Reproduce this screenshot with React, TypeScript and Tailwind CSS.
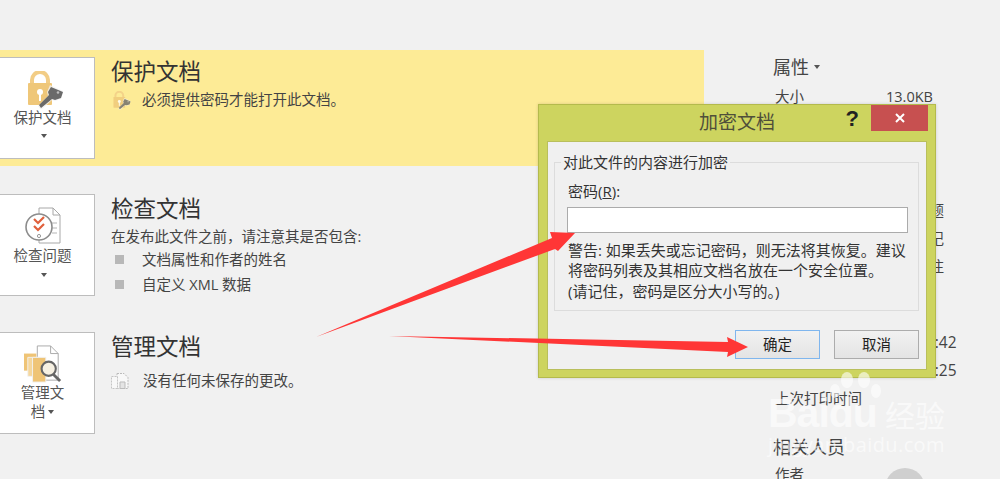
import React from "react";

function LockKeyIcon({ className }: { className: string }) {
  return (
    <svg viewBox="0 0 37 38" className={className}>
      <path d="M5 14V9a8 8 0 0 1 16 0v5" fill="none" stroke="#f2cd86" strokeWidth="4" />
      <path d="M2 12h22a1 1 0 0 1 1 1v20a1 1 0 0 1-1 1H2a1 1 0 0 1-1-1V13a1 1 0 0 1 1-1z" fill="#efc779" />
      <circle cx="13" cy="21" r="3" fill="#fff" />
      <rect x="12" y="22" width="2" height="8" fill="#fff" />
      <path d="M23 14l13 6-2 8-6 2-3-1-11 10-3-4 10-10-1-4z" fill="#f1f1f1" fillOpacity="0.8" />
      <path d="M24 16l12 5-2 6-6 2-3-1-11 9-2-3 10-10-1-3z" fill="#6a6a6a" />
      <circle cx="31" cy="21.5" r="1.3" fill="#bdbdbd" />
    </svg>
  );
}

function InspectIcon({ className }: { className: string }) {
  return (
    <svg viewBox="0 0 36 38" className={className}>
      <path d="M14 1h14l7 7v28H14z" fill="#fff" stroke="#a8a8a8" />
      <path d="M28 1v7h7" fill="none" stroke="#a8a8a8" />
      <path d="M27 16h5M27 21h5M27 26h5" stroke="#b5b5b5" />
      <circle cx="14" cy="20" r="13" fill="#fff" stroke="#8c8c8c" strokeWidth="1.6" />
      <path d="M9 12l4 4 6-6M9 19l4 4 6-6" fill="none" stroke="#e0603c" strokeWidth="2.2" />
      <circle cx="14" cy="29" r="1.6" fill="none" stroke="#999" />
    </svg>
  );
}

function ManageIcon({ className }: { className: string }) {
  return (
    <svg viewBox="0 0 40 40" className={className}>
      <path d="M14 1h14l8 8v28H14z" fill="#fff" stroke="#a8a8a8" />
      <path d="M28 1v8h8" fill="none" stroke="#a8a8a8" />
      <path d="M0 9h13v18H0z" fill="#efc476" />
      <path d="M4 13h13v20H4z" fill="#f5d79d" stroke="#f1f1f1" />
      <path d="M9 13h14v26H9z" fill="#efc476" stroke="#f1f1f1" />
      <circle cx="26" cy="25" r="7.5" fill="#f6f0e2" stroke="#666" strokeWidth="2.2" />
      <path d="M31 31l7 7" stroke="#666" strokeWidth="3" />
    </svg>
  );
}

function SmallDocsIcon() {
  return (
    <svg viewBox="0 0 18 16" className="w-[18px] h-[16px] shrink-0">
      <path d="M6 .5h7l4 4v11H6z" fill="#f8f8f8" stroke="#bbb" strokeDasharray="2 1" />
      <path d="M.5 3.5h6v12h-6z" fill="#f8f8f8" stroke="#c4c4c4" strokeDasharray="2 1" />
      <path d="M9 9h5v6.5H9z" fill="#e4e4e4" stroke="#bbb" />
    </svg>
  );
}

function Caret({ className = "" }: { className?: string }) {
  return (
    <span
      className={`inline-block w-0 h-0 border-x-[3.5px] border-x-transparent border-t-[4px] border-t-[#555] ${className}`}
    />
  );
}

function ActionButton({
  icon,
  children,
}: {
  icon: React.ReactNode;
  children: React.ReactNode;
}) {
  return (
    <button className="-ml-[10px] w-[105px] h-[102px] shrink-0 bg-white border border-[#bdbdbd] flex flex-col items-center text-[14.5px] leading-[19px] text-[#555]">
      {icon}
      {children}
    </button>
  );
}

function Row({ label, value }: { label: string; value?: React.ReactNode }) {
  return (
    <div className="flex h-[28px] items-center pl-[2px] text-[14.5px] text-[#444]">
      <span className="w-[111px] shrink-0">{label}</span>
      <span className="whitespace-nowrap">{value}</span>
    </div>
  );
}

function Heading({ children }: { children: React.ReactNode }) {
  return (
    <div className="h-[28px] flex items-center gap-[5px] text-[18px] text-[#444]">
      {children}
    </div>
  );
}

function DialogButton({
  primary,
  children,
}: {
  primary?: boolean;
  children: React.ReactNode;
}) {
  return (
    <button
      className={`w-[85px] h-[29px] bg-gradient-to-b from-[#f1f1f1] to-[#e4e4e4] text-[14.5px] text-[#222] border ${
        primary ? "border-[#7fb6ee]" : "border-[#acacac]"
      }`}
    >
      {children}
    </button>
  );
}

export default function App() {
  return (
    <div
      lang="zh-CN"
      className="relative flex h-[479px] w-full overflow-hidden bg-[#f1f1f1] text-[#444] [font-family:'Open_Sans','Noto_Sans_CJK_SC',sans-serif]"
    >
      {/* Info page */}
      <div className="w-[704px] shrink-0 pt-[50px]">
        <section className="h-[116px] bg-[#fdeb96] py-[7px] flex gap-[17px]">
          <ActionButton icon={<LockKeyIcon className="w-[37px] h-[38px] mt-[13px] ml-[6px] shrink-0" />}>
            <span className="-mt-[1px]">保护文档</span>
            <Caret className="mt-[7px] ml-[3px]" />
          </ActionButton>
          <div className="-ml-[1px]">
            <h2 className="text-[22.5px] leading-[30px] text-[#333]">保护文档</h2>
            <div className="flex items-center mt-[3px] text-[14.5px] leading-[20px]">
              <LockKeyIcon className="w-[18px] h-[19px] ml-[2px] mr-[11px] shrink-0 opacity-80" />
              必须提供密码才能打开此文档。
            </div>
          </div>
        </section>

        <section className="mt-[28px] h-[102px] flex gap-[17px]">
          <ActionButton icon={<InspectIcon className="w-[36px] h-[38px] mt-[12px] mb-[2px] shrink-0" />}>
            <span className="-mt-[1px]">检查问题</span>
            <Caret className="mt-[8px] ml-[3px]" />
          </ActionButton>
          <div className="-ml-[1px]">
            <h2 className="text-[22.5px] leading-[30px] text-[#333]">检查文档</h2>
            <p className="mt-[3px] text-[14.5px] leading-[20px]">在发布此文件之前，请注意其是否包含:</p>
            <ul className="text-[14.5px] leading-[25px]">
              <li className="flex items-center">
                <span className="w-[9px] h-[9px] bg-[#b8b8b8] ml-[4px] mr-[18px]" />
                文档属性和作者的姓名
              </li>
              <li className="flex items-center">
                <span className="w-[9px] h-[9px] bg-[#b8b8b8] ml-[4px] mr-[18px]" />
                自定义 XML 数据
              </li>
            </ul>
          </div>
        </section>

        <section className="mt-[36px] h-[102px] flex gap-[17px]">
          <ActionButton icon={<ManageIcon className="w-[38px] h-[38px] mt-[12px] shrink-0" />}>
            <span>管理文</span>
            <span className="flex items-center gap-[3px]">
              档<Caret />
            </span>
          </ActionButton>
          <div className="-ml-[1px]">
            <h2 className="text-[22.5px] leading-[30px] text-[#333]">管理文档</h2>
            <div className="flex items-center mt-[9px] text-[14.5px] leading-[20px]">
              <SmallDocsIcon />
              <span className="ml-[14px]">没有任何未保存的更改。</span>
            </div>
          </div>
        </section>
      </div>

      {/* Properties column */}
      <aside className="ml-[69px] pt-[53px] flex-1 min-w-0">
        <Heading>
          属性
          <Caret />
        </Heading>
        <div className="mt-[2px]">
          <Row label="大小" value="13.0KB" />
          <Row label="页数" value="1" />
          <Row label="字数" value="0" />
          <Row label="编辑时间总计" value="0 分钟" />
        </div>
        <div className="mt-[2px]">
          <Row label="标题" value="添加标题" />
          <Row label="标记" value="添加标记" />
          <Row label="备注" value="添加备注" />
        </div>
        <div className="mt-[10px]">
          <Heading>相关日期</Heading>
        </div>
        <div className="mt-[10px]">
          <Row label="上次修改时间" value={<span className="text-[15.5px]">今天10:42</span>} />
          <Row label="创建时间" value={<span className="text-[15.5px]">今天10:25</span>} />
          <Row label="上次打印时间" />
        </div>
        <div className="mt-[20px]">
          <Heading>相关人员</Heading>
        </div>
        <div className="flex pl-[2px] text-[14.5px]">
          <span className="w-[110px] shrink-0 leading-[28px]">作者</span>
          <span className="w-[40px] h-[40px] mt-[7px] shrink-0 rounded-full bg-[#cfcfcf]" />
        </div>
      </aside>

      {/* Encrypt dialog */}
      <div className="absolute left-[538px] top-[104px] w-[398px] h-[274px] bg-[#cdd45f] border border-[#b4ba4c] shadow-[0_0_3px_rgba(0,0,0,0.15)] flex flex-col">
        <div className="relative h-[36px] shrink-0 text-center text-[19px] leading-[35px] text-[#4f4f3a]">
          加密文档
          <span className="absolute right-[76px] top-[-4px] text-[22px] font-bold text-[#222] [font-family:'Liberation_Sans',sans-serif]">
            ?
          </span>
          <button className="absolute right-[7px] top-0 w-[57px] h-[26px] bg-[#c75050] flex items-center justify-center">
            <svg viewBox="0 0 10 10" className="w-[10px] h-[10px]">
              <path d="M1 1l8 8M9 1l-8 8" stroke="#fff" strokeWidth="2" />
            </svg>
          </button>
        </div>
        <div className="mx-[8px] mb-[7px] flex-1 bg-[#f0f0f0] border border-[#b9bf5c] pl-[6px] pr-[7px] pt-[10px]">
          <fieldset className="h-[159px] border border-[#dcdcdc] pl-[12px] pr-[10px]">
            <legend className="-ml-[6px] px-[2px] text-[15px] leading-[20px] text-[#333]">
              对此文件的内容进行加密
            </legend>
            <label className="block mt-[9px] ml-[1px] text-[15px] leading-[20px] text-[#333]">
              密码(<span className="underline">R</span>):
            </label>
            <input className="block mt-[6px] w-full h-[26px] bg-white border border-[#ababab]" />
            <p className="mt-[7px] ml-[1px] text-[15px] leading-[20.3px] text-[#333] whitespace-nowrap">
              警告: 如果丢失或忘记密码，则无法将其恢复。建议
              <br />
              将密码列表及其相应文档名放在一个安全位置。
              <br />
              (请记住，密码是区分大小写的。)
            </p>
          </fieldset>
          <div className="mt-[19px] flex justify-end gap-[14px]">
            <DialogButton primary>确定</DialogButton>
            <DialogButton>取消</DialogButton>
          </div>
        </div>
      </div>

      {/* Annotation arrows */}
      <svg viewBox="0 0 1000 479" className="absolute inset-0 w-[1000px] h-[479px] pointer-events-none">
        <polygon points="316,337 552,238 550,232 575,233 558,251 555,249" fill="#ff3636" />
        <polygon points="389,336 728,342 727,337 748,347 727,357 728,352" fill="#ff3636" />
      </svg>

      {/* Baidu watermark */}
      <div className="absolute left-[768px] top-[372px] w-[190px] h-[95px] pointer-events-none text-white/60">
        <svg viewBox="0 0 120 40" className="absolute left-[50px] top-0 w-[120px] h-[40px]">
          <ellipse cx="29" cy="8" rx="6" ry="8" fill="#fff" fillOpacity="0.6" />
          <ellipse cx="46" cy="8" rx="6" ry="8" fill="#fff" fillOpacity="0.6" />
          <ellipse cx="17" cy="19" rx="5" ry="7" fill="#fff" fillOpacity="0.6" />
          <ellipse cx="58" cy="19" rx="5" ry="7" fill="#fff" fillOpacity="0.6" />
        </svg>
        <div className="absolute left-0 top-[17px] flex items-baseline whitespace-nowrap [font-family:'Liberation_Sans',sans-serif]">
          <span className="text-[41px] leading-[48px] font-bold tracking-[-1px]">Baidu</span>
          <span className="ml-[8px] text-[30px] leading-[40px] [font-family:'Noto_Sans_CJK_SC',sans-serif]">经验</span>
        </div>
        <div className="absolute left-0 top-[58px] text-[20px] leading-[30px] tracking-[0.4px] whitespace-nowrap">
          jingyan.baidu.com
        </div>
      </div>
    </div>
  );
}
